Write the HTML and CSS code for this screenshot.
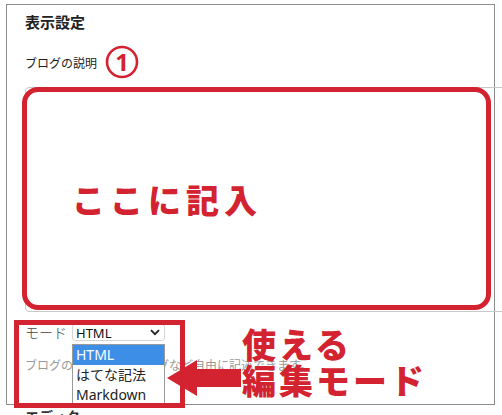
FILE: index.html
```html
<!DOCTYPE html>
<html lang="ja">
<head>
<meta charset="utf-8">
<link rel="stylesheet" href="styles.css">
</head>
<body>
<div class="page">
  <div class="frame">
    <h2 class="heading">表示設定</h2>
    <div class="label">ブログの説明</div>
    <div class="textarea"></div>
    <div class="mode-row">
      <span class="mode-label">モード</span>
      <div class="select">
        <span>HTML</span>
        <svg class="chev" width="10" height="7" viewBox="0 0 10 7"><path d="M1 1.2 L5 5.2 L9 1.2" fill="none" stroke="#222" stroke-width="1.8"/></svg>
      </div>
    </div>
    <div class="help">ブログの説明文には、タグなど自由に記述できます。</div>
  </div>
  <h3 class="subheading">エディタ</h3>

  <ul class="dropdown">
    <li class="opt selected">HTML</li>
    <li class="opt">はてな記法</li>
    <li class="opt">Markdown</li>
  </ul>

  <div class="anno-box-big"></div>
  <div class="anno-text-big">ここに記入</div>
  <svg class="anno-circle" width="36" height="34" viewBox="0 0 36 34">
    <circle cx="18" cy="17" r="15" fill="none" stroke="#d42330" stroke-width="2.6"/>
    <text x="18" y="26" text-anchor="middle" class="circle-num">1</text>
  </svg>
  <div class="anno-box-small"></div>
  <svg class="anno-arrow" width="76" height="40" viewBox="0 0 76 40">
    <polygon points="0,18 30,0 30,9 74,9 74,27 30,27 30,36" fill="#d42330"/>
  </svg>
  <div class="anno-text-side">
    <div>使える</div>
    <div>編集モード</div>
  </div>
</div>
</body>
</html>
```
FILE: styles.css
```css
html, body {
  margin: 0;
  padding: 0;
  background: #fff;
  overflow: hidden;
}
body {
  width: 502px;
  height: 415px;
  font-family: "Noto Sans CJK JP", "Noto Sans", sans-serif;
  color: #222;
}
.page {
  position: relative;
  width: 502px;
  height: 415px;
  overflow: hidden;
}
.frame {
  margin: 4px 0 0 6px;
  width: 489px;
  height: 401px;
  border: 1px solid #8c8c8c;
  padding: 6px 0 0 18px;
  box-sizing: border-box;
  overflow: visible;
}
.heading {
  margin: 0;
  font-size: 15px;
  font-weight: bold;
  line-height: 22px;
  color: #222;
}
.label {
  margin-top: 21px;
  font-size: 12px;
  line-height: 18px;
  color: #222;
}
.textarea {
  margin-top: 15px;
  width: 500px;
  height: 225px;
  border: 1px solid #c8c8c8;
  border-radius: 4px;
  box-sizing: border-box;
}
.mode-row {
  display: flex;
  align-items: center;
  gap: 5px;
  margin-top: 12px;
  height: 17px;
}
.mode-label {
  font-size: 14px;
  font-weight: 300;
  color: #444;
  line-height: 17px;
}
.select {
  display: flex;
  align-items: center;
  justify-content: space-between;
  width: 93px;
  height: 17px;
  box-sizing: border-box;
  border: 1px solid #d6d6d6;
  border-radius: 3px;
  padding: 0 4px 0 3px;
  font-family: "Noto Sans", sans-serif;
  font-size: 13px;
  color: #111;
}
.help {
  margin-top: 16px;
  font-size: 12px;
  line-height: 16px;
  color: #999;
}
.subheading {
  margin: 1px 0 0 25px;
  font-size: 14px;
  font-weight: bold;
  line-height: 20px;
  color: #333;
}
.dropdown {
  position: absolute;
  left: 72px;
  top: 344px;
  width: 93px;
  margin: 0;
  padding: 0;
  list-style: none;
  background: #fff;
  border: 1px solid #9a9a9a;
  box-sizing: border-box;
  font-family: "Noto Sans", "Noto Sans CJK JP", sans-serif;
  font-size: 14px;
}
.opt {
  height: 20px;
  line-height: 20px;
  padding-left: 3px;
  color: #222;
}
.opt.selected {
  background: #3d8ee6;
  color: #fff;
}
.anno-box-big {
  position: absolute;
  left: 22px;
  top: 87px;
  width: 469px;
  height: 223px;
  border: 5px solid #d42330;
  border-radius: 16px;
  box-sizing: border-box;
}
.anno-text-big {
  position: absolute;
  left: 72px;
  top: 183px;
  font-size: 33px;
  line-height: 1;
  font-weight: 900;
  letter-spacing: 5px;
  color: #d42330;
}
.anno-circle {
  position: absolute;
  left: 104px;
  top: 45px;
}
.circle-num {
  font-family: "Noto Sans", sans-serif;
  font-weight: bold;
  font-size: 24px;
  fill: #d42330;
}
.anno-box-small {
  position: absolute;
  left: 14px;
  top: 320px;
  width: 171px;
  height: 88px;
  border: 5px solid #d42330;
  box-sizing: border-box;
}
.anno-arrow {
  position: absolute;
  left: 167px;
  top: 360px;
}
.anno-text-side {
  position: absolute;
  left: 242px;
  top: 326px;
  font-size: 34px;
  line-height: 36px;
  font-weight: 900;
  letter-spacing: 3px;
  color: #d42330;
}
```
